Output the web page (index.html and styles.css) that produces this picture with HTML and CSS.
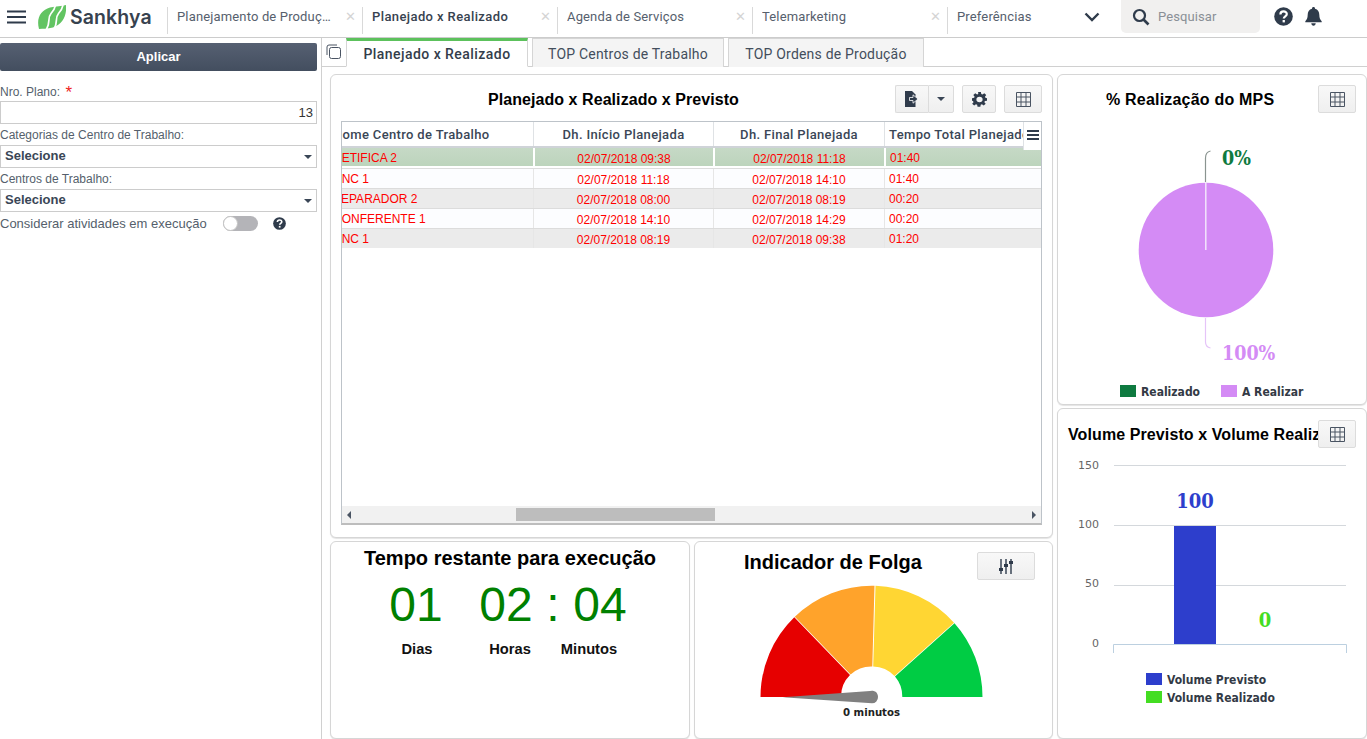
FILE: index.html
```html
<!DOCTYPE html>
<html lang="pt-BR">
<head>
<meta charset="utf-8">
<title>Planejado x Realizado</title>
<link rel="stylesheet" href="styles.css">
</head>
<body>
<header class="topbar">
  <button class="burger" aria-label="Menu"><svg width="20" height="14" viewBox="0 0 20 14"><path d="M0 1.500h19M0 7h19M0 12.500h19" stroke="#2f3b4b" stroke-width="2"/></svg></button>
  <div class="logo">
    <svg width="28" height="24" viewBox="0 0 28 24"><path d="M1 24C-2 13 3 5 12 2.500 18 1 24 1.500 28 0 29 10 25 19 15 22.500 9 24 5 23.500 1 24z" fill="#62c462"/><path d="M8 25C13 18 9 13 13 8.500S17 3 17.500 0M15.500 25C20.500 18 16.500 13 20.500 8.500S24.500 3 25 0" fill="none" stroke="#fff" stroke-width="1.700"/></svg>
    <span class="logo-text">Sankhya</span>
  </div>
  <nav class="apptabs">
    <div class="apptab"><span class="apptab-label">Planejamento de Produção</span><span class="x">✕</span></div>
    <div class="apptab active"><span class="apptab-label">Planejado x Realizado</span><span class="x">✕</span></div>
    <div class="apptab"><span class="apptab-label">Agenda de Serviços</span><span class="x">✕</span></div>
    <div class="apptab"><span class="apptab-label">Telemarketing</span><span class="x">✕</span></div>
    <div class="apptab last"><span class="apptab-label">Preferências</span></div>
  </nav>
  <svg class="chev" width="16" height="10" viewBox="0 0 16 10"><path d="M1.500 1.500L8 8l6.500-6.500" fill="none" stroke="#2f3b4b" stroke-width="2.400"/></svg>
  <div class="search">
    <svg width="18" height="18" viewBox="0 0 18 18"><circle cx="7.500" cy="7.500" r="5.500" fill="none" stroke="#2f3b4b" stroke-width="2.200"/><path d="M11.500 11.500L16.500 16.500" stroke="#2f3b4b" stroke-width="2.600"/></svg>
    <span>Pesquisar</span>
  </div>
  <svg class="help" width="19" height="19" viewBox="0 0 19 19"><circle cx="9.500" cy="9.500" r="9.300" fill="#2f3b4b"/><path d="M6.400 7.400c0-4 6.400-4 6.400-.3 0 2.300-3 2.300-3 4.400" fill="none" stroke="#fff" stroke-width="2.200"/><rect x="8.600" y="13" width="2.300" height="2.400" fill="#fff"/></svg>
  <svg class="bell" width="17" height="19" viewBox="0 0 17 19"><path d="M8.500 0c1 0 1.500.7 1.500 1.700 3 .7 4.300 3 4.300 6 0 3.500 1 5 2.400 6.500v1H.3v-1C1.700 12.700 2.700 11.200 2.700 7.700c0-3 1.300-5.300 4.300-6C7 .7 7.500 0 8.500 0zM6.300 16.300h4.400c0 1.500-1 2.500-2.200 2.500s-2.200-1-2.200-2.500z" fill="#2f3b4b"/></svg>
</header>

<div class="body">
  <aside class="sidebar">
    <button class="apply">Aplicar</button>
    <label class="lbl lbl-first">Nro. Plano: <span class="req">*</span></label>
    <div class="field num">13</div>
    <label class="lbl">Categorias de Centro de Trabalho:</label>
    <div class="field sel">Selecione<i class="caret"></i></div>
    <label class="lbl">Centros de Trabalho:</label>
    <div class="field sel">Selecione<i class="caret"></i></div>
    <div class="toggle-row">
      <span class="lbl-inline">Considerar atividades em execução</span>
      <span class="switch"><i></i></span>
      <svg width="13" height="13" viewBox="0 0 19 19"><circle cx="9.500" cy="9.500" r="9.300" fill="#2f3b4b"/><path d="M6.400 7.400c0-4 6.400-4 6.400-.3 0 2.300-3 2.300-3 4.400" fill="none" stroke="#fff" stroke-width="2.400"/><rect x="8.500" y="13" width="2.500" height="2.500" fill="#fff"/></svg>
    </div>
  </aside>

  <main class="content">
    <div class="subtabs">
      <svg class="copy" width="16" height="16" viewBox="0 0 16 16"><path d="M1 11V3a2 2 0 0 1 2-2h8" fill="none" stroke="#4a5463" stroke-width="1"/><rect x="3.500" y="3.500" width="11" height="11" rx="2" fill="#fff" stroke="#4a5463" stroke-width="1"/></svg>
      <div class="subtab on">Planejado x Realizado</div>
      <div class="subtab">TOP Centros de Trabalho</div>
      <div class="subtab">TOP Ordens de Produção</div>
    </div>
    <div class="dash">
      <div class="col-left">
        <section class="panel p-main">
          <div class="main-head">
            <h2 class="t16 main-title">Planejado x Realizado x Previsto</h2>
            <div class="btn-group">
              <button class="btn b-export"><svg width="14" height="16" viewBox="0 0 14 16"><path d="M0 0h7l3.500 3.500V16H0z" fill="#2f3b4b"/><path d="M4.500 6.500H8V3.800L13 8l-5 4.200V9.500H4.500z" fill="#2f3b4b" stroke="#fff" stroke-width=".8"/></svg></button>
              <button class="btn b-drop"><i class="caret dark"></i></button>
            </div>
            <button class="btn b-gear"><svg width="15" height="15" viewBox="0 0 16 16"><path fill-rule="evenodd" d="M6.500 0h3l.4 2.300 1.300.6L13.100 1.500l2.100 2.100-1.400 2 .5 1.300L16 7.300v3l-2.300.4-.5 1.300 1.400 1.900-2.100 2.100-1.900-1.400-1.300.5-.4 2.300h-3l-.4-2.300-1.300-.5-1.900 1.400-2.100-2.100 1.400-1.900-.5-1.300L0 10.300v-3l2.300-.4.500-1.300-1.400-2L3.500 1.500l1.900 1.400 1.300-.6zM8 5.500a3.300 3.300 0 1 0 0 6.600 3.300 3.300 0 0 0 0-6.600z" transform="scale(1 .9)" fill="#2f3b4b"/></svg></button>
            <button class="btn b-grid"><svg class="grid-ic" viewBox="0 0 15 15"><path d="M.5.500h14v14H.5zM.5 5h14M.5 10h14M5 .5v14M10 .5v14" fill="none" stroke="#4a5463"/></svg></button>
          </div>
          <div class="table">
            <div class="table-view">
              <div class="tr th">
                <div class="c c1">Nome Centro de Trabalho</div>
                <div class="c c2">Dh. Início Planejada</div>
                <div class="c c3">Dh. Final Planejada</div>
                <div class="c c4">Tempo Total Planejado</div>
              </div>
              <div class="tr td sel-row"><div class="c c1">RETIFICA 2</div><div class="c c2">02/07/2018 09:38</div><div class="c c3">02/07/2018 11:18</div><div class="c c4">01:40</div></div>
              <div class="tr td"><div class="c c1">CNC 1</div><div class="c c2">02/07/2018 11:18</div><div class="c c3">02/07/2018 14:10</div><div class="c c4">01:40</div></div>
              <div class="tr td alt"><div class="c c1">SEPARADOR 2</div><div class="c c2">02/07/2018 08:00</div><div class="c c3">02/07/2018 08:19</div><div class="c c4">00:20</div></div>
              <div class="tr td"><div class="c c1">CONFERENTE 1</div><div class="c c2">02/07/2018 14:10</div><div class="c c3">02/07/2018 14:29</div><div class="c c4">00:20</div></div>
              <div class="tr td alt"><div class="c c1">CNC 1</div><div class="c c2">02/07/2018 08:19</div><div class="c c3">02/07/2018 09:38</div><div class="c c4">01:20</div></div>
              <div class="col-menu"><svg width="12" height="10" viewBox="0 0 12 10"><path d="M0 1h12M0 5h12M0 9h12" stroke="#2f3b4b" stroke-width="2"/></svg></div>
            </div>
            <div class="hscroll">
              <i class="arrow left"></i>
              <div class="track"><div class="thumb"></div></div>
              <i class="arrow right"></i>
            </div>
          </div>
        </section>
        <div class="row-lower">
          <section class="panel p-time">
            <h2 class="t20">Tempo restante para execução</h2>
            <div class="count">
              <span class="n n1">01</span><span class="n n2">02</span><span class="n n3">:</span><span class="n n4">04</span>
            </div>
            <div class="units">
              <span class="u u1">Dias</span><span class="u u2">Horas</span><span class="u u3">Minutos</span>
            </div>
          </section>
          <section class="panel p-gauge">
            <div class="gauge-head">
              <h2 class="t20 gauge-title">Indicador de Folga</h2>
              <button class="btn b-sliders"><svg width="14" height="15" viewBox="0 0 14 15"><path d="M2 0v15M7 0v15M12 0v15" stroke="#3a4656" stroke-width="1.500"/><rect x="0" y="9" width="4" height="3" fill="#2f3b4b"/><rect x="5" y="5" width="4" height="3" fill="#2f3b4b"/><rect x="10" y="2" width="4" height="3" fill="#2f3b4b"/></svg></button>
            </div>
            <svg class="gauge" width="358" height="140" viewBox="0 0 358 140">
              <g transform="translate(-695 -585)">
                <path d="M760.500 697A111 111 0 0 1 794.300 617.300L850 675A30.500 30.500 0 0 0 841 697Z" fill="#e60000"/>
                <path d="M794.800 616.800A111 111 0 0 1 874.500 585.700L872.300 666.500A30.500 30.500 0 0 0 850.600 674.500Z" fill="#ffa32b"/>
                <path d="M875.500 585.700A111 111 0 0 1 954 622.700L894.500 676A30.500 30.500 0 0 0 873.200 666.500Z" fill="#ffd633"/>
                <path d="M954.500 623.200A111 111 0 0 1 982.500 697H902.300A30.500 30.500 0 0 0 895 676.500Z" fill="#00cc44"/>
                <path d="M782.700 697.300L870 691a6 6 0 0 1 8 6 6 6 0 0 1-6 6.300z" fill="#808080"/>
                <text x="871.500" y="716" class="gauge-txt" text-anchor="middle">0 minutos</text>
              </g>
            </svg>
          </section>
        </div>
      </div>
      <div class="col-right">
        <section class="panel p-pie">
          <div class="chart-head">
            <h2 class="t16 pie-title">% Realização do MPS</h2>
            <button class="btn b-grid"><svg class="grid-ic" viewBox="0 0 15 15"><path d="M.5.500h14v14H.5zM.5 5h14M.5 10h14M5 .5v14M10 .5v14" fill="none" stroke="#4a5463"/></svg></button>
          </div>
          <svg class="pie" width="308" height="280" viewBox="0 0 308 280">
            <g transform="translate(-1058 -125)">
              <circle cx="1206" cy="250" r="67.300" fill="#d48bf5"/>
              <path d="M1205.800 250V183" stroke="#f3e4fb" stroke-width="1.500"/>
              <path d="M1205.500 182V158q0-6 5-7" fill="none" stroke="#8a9490" stroke-width="1.200"/>
              <path d="M1205.500 318v24q0 5 5 6" fill="none" stroke="#e5c4f8" stroke-width="1.200"/>
              <text x="1222" y="165" class="pie-lbl" fill="#0e7a40">0%</text>
              <text x="1222" y="360" class="pie-lbl" fill="#d48bf5">100%</text>
              <rect x="1120" y="385" width="16" height="12" fill="#0e7a40"/>
              <text x="1141" y="396" class="leg">Realizado</text>
              <rect x="1221" y="385" width="16" height="12" fill="#d48bf5"/>
              <text x="1242" y="396" class="leg">A Realizar</text>
            </g>
          </svg>
        </section>
        <section class="panel p-bar">
          <div class="chart-head bar-head">
            <h2 class="t16 bar-title">Volume Previsto x Volume Realizado</h2>
            <button class="btn b-grid over"><svg class="grid-ic" viewBox="0 0 15 15"><path d="M.5.500h14v14H.5zM.5 5h14M.5 10h14M5 .5v14M10 .5v14" fill="none" stroke="#4a5463"/></svg></button>
          </div>
          <svg class="bars" width="308" height="280" viewBox="0 0 308 280">
            <g transform="translate(-1058 -455)">
              <path d="M1114 465.500H1346M1114 525.500H1346M1114 585.500H1346" stroke="#d4d8dc"/>
              <path d="M1113.500 653V644.500H1346.500V653" fill="none" stroke="#bcd0e0"/>
              <text x="1099" y="469" class="tick" text-anchor="end">150</text>
              <text x="1099" y="528" class="tick" text-anchor="end">100</text>
              <text x="1099" y="587" class="tick" text-anchor="end">50</text>
              <text x="1099" y="647" class="tick" text-anchor="end">0</text>
              <rect x="1174" y="526" width="42" height="118" fill="#2d3ecc"/>
              <text x="1195" y="508" class="bar-val" fill="#2d3ecc" text-anchor="middle">100</text>
              <text x="1265" y="627" class="bar-val" fill="#44dd22" text-anchor="middle">0</text>
              <rect x="1146" y="673" width="16" height="12" fill="#2d3ecc"/>
              <text x="1167" y="684" class="leg">Volume Previsto</text>
              <rect x="1146" y="691" width="16" height="12" fill="#44dd22"/>
              <text x="1167" y="702" class="leg">Volume Realizado</text>
            </g>
          </svg>
        </section>
      </div>
    </div>
  </main>
</div>
</body>
</html>
```

FILE: styles.css
```css
* { box-sizing: border-box; }
html, body { margin: 0; height: 739px; overflow: hidden; background: #fff; }
body { font-family: "Liberation Sans", Arial, sans-serif; color: #333; display: flex; flex-direction: column; }
button { font-family: inherit; }
h2 { margin: 0; }

/* top bar */
.topbar { height: 38px; flex: none; display: flex; align-items: flex-start; border-bottom: 1px solid #ccc; position: relative; }
.burger { border: 0; background: none; padding: 0; margin: 10px 0 0 7px; width: 20px; height: 14px; line-height: 0; }
.logo { display: flex; align-items: center; margin: 5px 0 0 11px; width: 129px; height: 24px; }
.logo-text { font: 600 19.500px "Inter", "Open Sans", sans-serif; color: #37424f; margin-left: 4px; letter-spacing: .1px; }
.apptabs { display: flex; }
.apptab { width: 195px; height: 27px; margin-top: 7px; border-left: 1px solid #d9d9d9; padding-left: 9px; display: flex; align-items: center; position: relative; }
.apptab-label { font: 400 13px Roboto, sans-serif; letter-spacing: .15px; color: #56606d; width: 156px; white-space: nowrap; overflow: hidden; text-overflow: ellipsis; position: relative; top: -4px; }
.apptab.active .apptab-label { color: #37424f; font-weight: 500; letter-spacing: .4px; }
.x { position: absolute; right: 6px; top: 2px; font-size: 13px; line-height: 15px; color: #d4d4d4; }
.apptab.last { width: 140px; }
.chev { margin: 12px 0 0 -3px; }
.search { margin-left: 21px; width: 139px; height: 33px; background: #f1f0ef; border-radius: 0 0 5px 5px; display: flex; align-items: center; padding-left: 11px; gap: 8px; font: 400 13px Roboto, sans-serif; letter-spacing: .1px; color: #8a8f96; }
.help { margin: 7px 0 0 14px; }
.bell { margin: 7px 0 0 12px; }

/* layout */
.body { flex: 1; display: flex; min-height: 0; }
.sidebar { width: 322px; flex: none; border-right: 1px solid #d0d0d0; padding: 5px 4px 0 0; }
.content { flex: 1; min-width: 0; display: flex; flex-direction: column; }

/* sidebar */
.apply { display: block; width: 100%; height: 28px; border: 0; border-radius: 2px; background: linear-gradient(#566072, #434e5f); color: #fff; font-size: 13px; font-weight: 700; padding: 0 0 2px; }
.lbl { display: block; font-size: 12px; line-height: 14px; color: #555f6c; margin-top: 1px; }
.lbl-first { margin-top: 14px; margin-bottom: 2px; }
.req { color: #e22; font-size: 17px; line-height: 10px; vertical-align: -2px; margin-left: 2px; }
.field { height: 23px; border: 1px solid #ccc; background: #fff; font-size: 12px; line-height: 21px; color: #333; margin-bottom: 3px; position: relative; }
.field.num { text-align: right; padding-right: 3px; color: #333; font-size: 13px; margin-bottom: 4px; line-height: 22px; }
.field.sel { font-weight: 700; padding-left: 4px; color: #3a4656; font-size: 13px; line-height: 20px; margin-bottom: 4px; }
.lbl + .field.sel { margin-top: 3px; }
.caret { display: inline-block; width: 0; height: 0; border-left: 4px solid transparent; border-right: 4px solid transparent; border-top: 4px solid #3a4656; }
.field .caret { position: absolute; right: 4px; top: 9px; }
.toggle-row { display: flex; align-items: center; height: 20px; margin-top: -3px; }
.lbl-inline { font-size: 13px; color: #555f6c; width: 223px; white-space: nowrap; }
.switch { width: 35px; height: 15px; background: #b4b4b8; border-radius: 8px; position: relative; margin-right: 15px; }
.switch i { position: absolute; left: 0; top: 0; width: 15px; height: 15px; border-radius: 50%; background: #fff; border: 1px solid #c4c4c4; }

/* subtabs */
.subtabs { height: 29px; flex: none; display: flex; border-bottom: 1px solid #d0d0d0; padding-left: 4px; position: relative; gap: 4px; }
.copy { margin: 6px 0 0 0; }
.subtab { height: 29px; width: 192px; border: 1px solid #d5d5d5; border-bottom: 0; background: #f4f4f4; font: 400 14px Roboto, sans-serif; letter-spacing: .2px; color: #434e5c; text-align: center; line-height: 30px; }
.subtab:nth-child(4) { width: 196px; }
.subtab.on { width: 182px; background: #fff; border-top: 3px solid #5cc15c; border-bottom: 1px solid #fff; font-weight: 500; color: #333d4b; letter-spacing: .45px; line-height: 27px; height: 29px; }

/* dashboard */
.dash { flex: 1; display: flex; gap: 4px; padding: 7px 0 0 8px; min-height: 0; }
.col-left { width: 723px; display: flex; flex-direction: column; gap: 3px; }
.col-right { width: 310px; display: flex; flex-direction: column; gap: 3px; }
.row-lower { display: flex; gap: 4px; height: 198px; }
.panel { background: #fff; border: 1px solid #d6d6d6; border-radius: 6px; box-shadow: 0 1px 1px #e4e4e4; min-height: 0; overflow: hidden; position: relative; }
.p-main { flex: 1; padding: 0 10px 0 10px; }
.p-time { width: 360px; text-align: center; }
.p-gauge { flex: 1; }
.p-pie { height: 331px; }
.p-bar { flex: 1; }

.t16 { font-size: 16px; font-weight: 700; color: #000; }
.t20 { font-size: 20px; font-weight: 700; color: #000; }

.btn { border: 1px solid #dcdcdc; border-radius: 2px; background: linear-gradient(#f8f8f8, #efefef); padding: 0; height: 28px; display: flex; align-items: center; justify-content: center; }
.grid-ic { width: 15px; height: 15px; }
.b-grid { width: 38px; }

.main-head { height: 46px; display: flex; align-items: flex-start; padding-top: 10px; }
.main-title { margin-left: 147px; width: 407px; line-height: 30px; letter-spacing: .06px; }
.btn-group { display: flex; }
.b-export { width: 33px; border-right: 0; border-radius: 2px 0 0 2px; }
.b-drop { width: 26px; border-radius: 0 2px 2px 0; }
.b-gear { width: 34px; margin-left: 8px; }
.b-grid { margin-left: 8px; }

/* table */
.table { height: 404px; border: 1px solid #bdc3c9; border-bottom: 2px solid #bdbdbd; position: relative; display: flex; flex-direction: column; }
.table-view { flex: 1; overflow: hidden; position: relative; }
.tr { display: flex; margin-left: -24px; width: 900px; }
.c { white-space: nowrap; overflow: hidden; flex: none; }
.c1 { width: 215px; }
.c2 { width: 180px; text-align: center; }
.c3 { width: 171px; text-align: center; }
.c4 { width: 334px; padding-left: 4px; }
.th { height: 26px; border-bottom: 2px solid #cfd3d8; }
.th .c { font: 500 13px/26px Roboto, sans-serif; letter-spacing: .35px; color: #3a4656; border-left: 1px solid #dfe2e5; height: 24px; }
.th .c1 { border-left: 0; padding-left: 15px; }
.td { height: 20px; border-top: 1px solid #dcdcdc; background: #fcfdff; color: #f00; font-size: 12px; line-height: 22px; }
.td .c { border-left: 1px solid #e6e6e6; }
.td .c1 { border-left: 0; padding-left: 15px; line-height: 20px; }
.td .c4 { line-height: 20px; }
.td.alt { background: #ebebeb; }
.td.sel-row { background: #fff; height: 20px; border-top: 0; padding-bottom: 2px; }
.td.sel-row .c { background: linear-gradient(#c6d9c6, #bcd4bc); border-left: 2px solid #fff; line-height: 22px; height: 18px; }
.td.sel-row .c1, .td.sel-row .c4 { line-height: 21px; }
.td.sel-row .c1 { border-left: 0; }
.col-menu { position: absolute; right: 0; top: 0; width: 18px; height: 28px; background: #fff; border-left: 1px solid #dfe2e5; display: flex; justify-content: center; padding-top: 8px; }
.hscroll { height: 17px; background: #f1f1f1; display: flex; align-items: center; }
.track { flex: 1; height: 100%; padding: 2px 0 0 160px; }
.thumb { width: 199px; height: 13px; background: #bdbdbd; }
.arrow { width: 0; height: 0; border-top: 4px solid transparent; border-bottom: 4px solid transparent; margin: 0 5px; }
.arrow.left { border-right: 4px solid #4a5463; }
.arrow.right { border-left: 4px solid #4a5463; }

/* time */
.p-time .t20 { line-height: 30px; margin-top: 1px; }
.count { display: flex; height: 60px; align-items: center; font-size: 48px; color: #008000; margin-top: 1px; text-align: center; }
.n { display: block; width: 60px; }
.n1 { margin-left: 55px; }
.n2 { margin-left: 30px; }
.n3 { width: 34px; }
.units { display: flex; font-size: 14.700px; font-weight: 700; color: #111; margin-top: 7px; }
.u { width: 60px; text-align: center; }
.u1 { margin-left: 56px; }
.u2 { margin-left: 33px; }
.u3 { margin-left: 19px; }

/* gauge */
.gauge-head { height: 43px; display: flex; align-items: flex-start; padding-top: 7px; }
.gauge-title { margin-left: 49px; width: 233px; line-height: 26px; letter-spacing: 0; }
.b-sliders { width: 58px; margin-top: 3px; }
.gauge { display: block; }
.gauge-txt { font: 700 11.300px "DejaVu Sans Condensed", "DejaVu Sans", sans-serif; fill: #222; }

/* charts */
.chart-head { height: 50px; display: flex; align-items: flex-start; padding-top: 10px; }
.pie-title { margin-left: 48px; width: 204px; line-height: 30px; letter-spacing: .2px; }
.bar-head { height: 46px; padding-top: 11px; position: relative; overflow: hidden; }
.bar-title { margin-left: 10px; white-space: nowrap; line-height: 30px; letter-spacing: .1px; }
.over { position: absolute; left: 260px; top: 11px; margin: 0; }
.pie, .bars { display: block; }
.pie-lbl { font: 700 19.500px "DejaVu Serif Condensed", "DejaVu Serif", serif; }
.leg { font: 700 12px "DejaVu Sans Condensed", "DejaVu Sans", sans-serif; fill: #333a45; }
.tick { font: 400 11px "DejaVu Sans", sans-serif; fill: #666; }
.bar-val { font: 700 20px "DejaVu Serif Condensed", "DejaVu Serif", serif; }
```
